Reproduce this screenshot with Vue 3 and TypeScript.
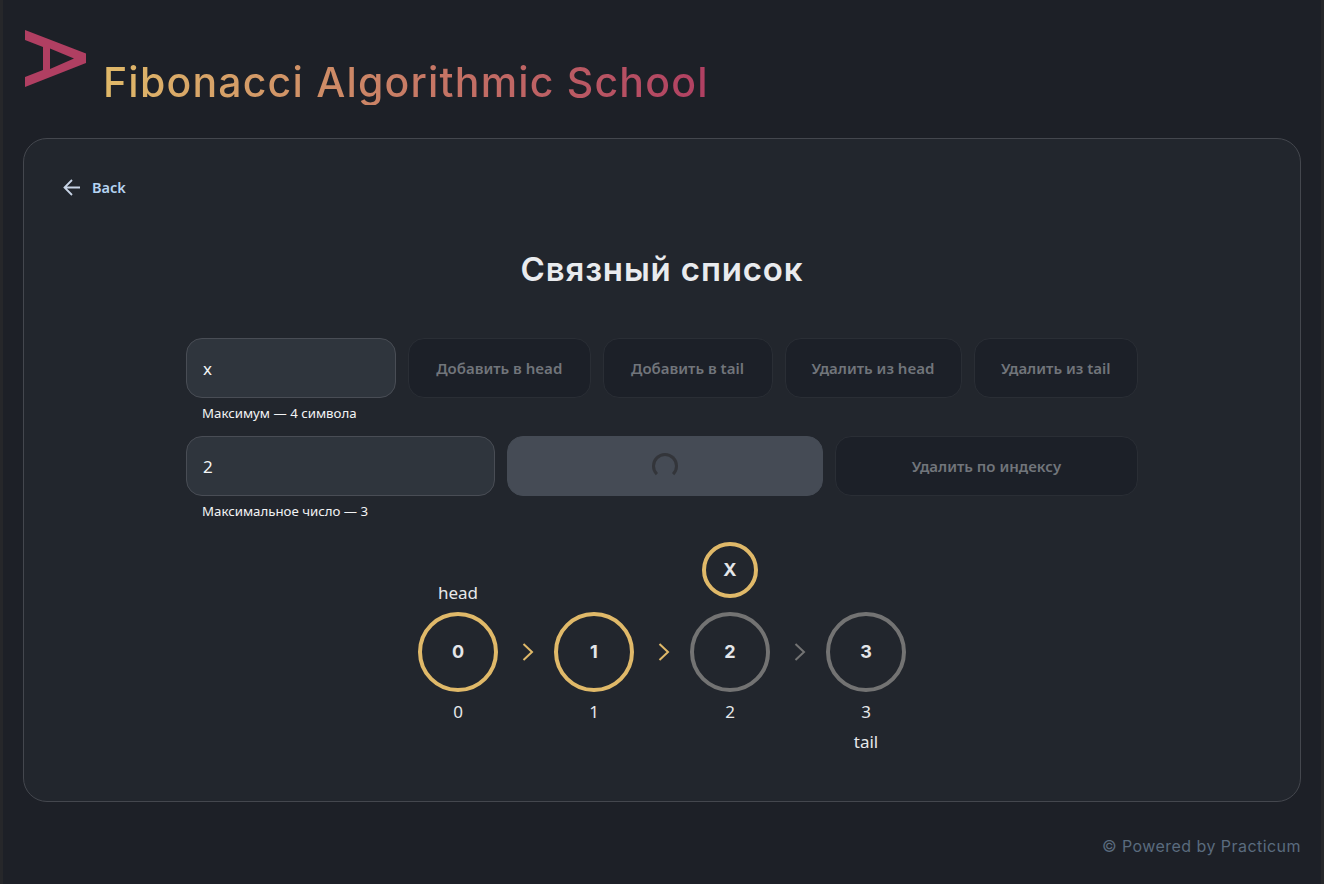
<script setup lang="ts">
const topRow = ["Добавить в head", "Добавить в tail", "Удалить из head", "Удалить из tail"];

type Node = { value: string; index: string; active: boolean; head?: boolean; tail?: boolean; pending?: string };

const nodes: Node[] = [
  { value: "0", index: "0", active: true, head: true },
  { value: "1", index: "1", active: true },
  { value: "2", index: "2", active: false, pending: "x" },
  { value: "3", index: "3", active: false, tail: true },
];
</script>

<template>
  <div class="page">
    <header class="header">
      <svg class="logo" width="62" height="58" viewBox="0 0 62 58" aria-hidden="true">
        <path d="M0 0 L61 23.500 V33 L0 57 V47 L18 40 V17 L0 10 Z M25 18.500 V39 L49 28.500 Z" fill="#b03f62" fill-rule="evenodd" />
      </svg>
      <h1 class="brand">Fibonacci Algorithmic School</h1>
    </header>

    <main class="card">
      <a class="back">
        <svg width="18" height="18" viewBox="0 0 18 18" fill="none" aria-hidden="true">
          <path d="M17 9.500H2M9 2 L1.500 9.500 L9 17" stroke="#c8d4e6" stroke-width="1.800" />
        </svg>
        <span>Back</span>
      </a>

      <h2 class="title">Связный список</h2>

      <section class="controls">
        <div class="row top-row">
          <div class="field">
            <div class="input">x</div>
            <p class="hint">Максимум — 4 символа</p>
          </div>
          <button v-for="label in topRow" :key="label" class="btn" disabled>{{ label }}</button>
        </div>
        <div class="row bottom-row">
          <div class="field">
            <div class="input">2</div>
            <p class="hint">Максимальное число — 3</p>
          </div>
          <button class="btn loading" disabled><span class="spinner"></span></button>
          <button class="btn" disabled>Удалить по индексу</button>
        </div>
      </section>

      <ul class="list">
        <li v-for="(node, i) in nodes" :key="node.index" class="item">
          <div class="node">
            <div class="top">
              <span v-if="node.head" class="label">head</span>
              <span v-if="node.pending" class="circle small">{{ node.pending }}</span>
            </div>
            <div class="circle" :class="{ active: node.active }">{{ node.value }}</div>
            <span class="index">{{ node.index }}</span>
            <span class="label tail">{{ node.tail ? "tail" : "" }}</span>
          </div>
          <svg v-if="i < nodes.length - 1" class="arrow" :class="{ active: node.active }" width="12" height="18" viewBox="0 0 12 18" fill="none" aria-hidden="true">
            <path d="M1.500 1 L10 9 L1.500 17" stroke="currentColor" stroke-width="2" />
          </svg>
        </li>
      </ul>
    </main>

    <footer class="footer">© Powered by Practicum</footer>
  </div>
</template>

<style>
html,
body {
  background: #1d2027;
}
</style>

<style scoped>
.page {
  box-sizing: border-box;
  height: 884px;
  padding: 0 20px;
  border-left: 3px solid #26272a;
  border-right: 3px solid #26272a;
  font-family: "Noto Sans", sans-serif;
  color: #fff;
  overflow: hidden;
}

.header {
  display: flex;
  align-items: flex-start;
  height: 138px;
  box-sizing: border-box;
  padding: 30px 0 0 2px;
}

.logo {
  flex: none;
}

.brand {
  margin: 29px 0 0 16px;
  font-family: "Inter", sans-serif;
  font-size: 41px;
  line-height: 46px;
  font-weight: 500;
  letter-spacing: 1.200px;
  background: linear-gradient(90deg, #e0b969 0%, #b03f62 100%);
  -webkit-background-clip: text;
  background-clip: text;
  color: transparent;
}

.card {
  box-sizing: border-box;
  height: 664px;
  padding: 36px 40px 0;
  background: #22262d;
  border: 1px solid #44474e;
  border-radius: 24px;
}

.back {
  display: flex;
  align-items: center;
  gap: 11px;
  height: 24px;
  margin-left: -1px;
  font-size: 14.500px;
  font-weight: 600;
  color: #b6d4f2;
}

.title {
  margin: 50px 0 0;
  text-align: center;
  font-family: "Inter", sans-serif;
  font-size: 33px;
  line-height: 40px;
  font-weight: 600;
  letter-spacing: 0.850px;
  color: #e9ebee;
}

.controls {
  width: 952px;
  margin: 49px auto 0;
  display: flex;
  flex-direction: column;
  gap: 14px;
}

.row {
  display: grid;
  gap: 12px;
}

.top-row {
  grid-template-columns: 210px 182.500px 170px 177px 1fr;
}

.bottom-row {
  grid-template-columns: 309px 316px 1fr;
}

.input {
  box-sizing: border-box;
  height: 60px;
  padding: 0 16px;
  display: flex;
  align-items: center;
  background: #2f353d;
  border: 1px solid #494d55;
  border-radius: 16px;
  font-size: 17px;
  color: #f4f5f6;
}

.hint {
  margin: 6px 0 0;
  padding-left: 16px;
  font-size: 13.250px;
  line-height: 18px;
  color: #f2f3f4;
}

.btn {
  box-sizing: border-box;
  height: 60px;
  padding: 0;
  background: #1c2028;
  border: 1px solid #2a2e35;
  border-radius: 16px;
  font-family: inherit;
  font-size: 15px;
  font-weight: 600;
  color: #71757b;
}

.loading {
  display: flex;
  align-items: center;
  justify-content: center;
  background: #454b55;
  border-color: #454b55;
}

.spinner {
  box-sizing: border-box;
  width: 26px;
  height: 26px;
  border-radius: 50%;
  border: 3px solid #33353a;
  border-bottom-color: transparent;
}

.list {
  list-style: none;
  margin: 22px 0 0;
  padding: 0 0 0 354px;
  display: flex;
}

.item {
  display: flex;
  align-items: flex-start;
}

.node {
  width: 80px;
  display: flex;
  flex-direction: column;
  align-items: center;
}

.top {
  height: 70px;
  display: flex;
  align-items: flex-end;
  justify-content: center;
  padding-bottom: 7px;
  box-sizing: border-box;
}

.label {
  font-size: 17px;
  line-height: 24px;
  color: #e6e8ea;
}

.circle {
  box-sizing: border-box;
  width: 80px;
  height: 80px;
  flex: none;
  display: flex;
  align-items: center;
  justify-content: center;
  padding-bottom: 2px;
  border: 4px solid #737373;
  border-radius: 50%;
  font-family: "Inter", sans-serif;
  font-size: 18px;
  font-weight: 700;
  color: #e4e6e9;
  text-transform: uppercase;
}

.circle.active {
  border-color: #e0b969;
}

.circle.small {
  width: 56px;
  height: 56px;
  margin-bottom: 7px;
  border-color: #e0b969;
}

.index {
  margin-top: 8px;
  font-size: 17px;
  line-height: 24px;
  color: #e6e8ea;
}

.tail {
  margin-top: 6px;
  min-height: 24px;
}

.arrow {
  flex: none;
  margin: 101px 20px 0 24px;
  color: #737373;
}

.arrow.active {
  color: #e0b969;
}

.footer {
  margin-top: 33px;
  text-align: right;
  font-family: "Inter", sans-serif;
  font-size: 16px;
  line-height: 22px;
  letter-spacing: 0.450px;
  color: #5a6b7e;
}
</style>
